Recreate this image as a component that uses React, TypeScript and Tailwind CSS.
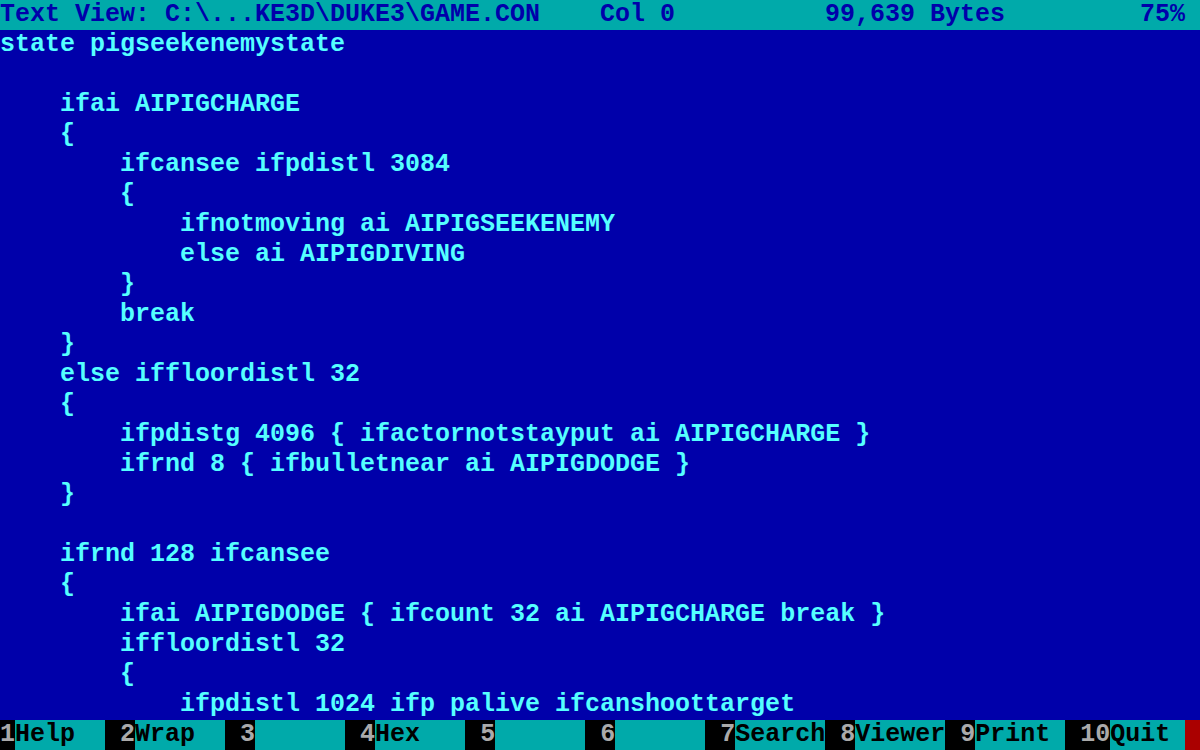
const lines = [
  "state pigseekenemystate",
  "",
  "    ifai AIPIGCHARGE",
  "    {",
  "        ifcansee ifpdistl 3084",
  "        {",
  "            ifnotmoving ai AIPIGSEEKENEMY",
  "            else ai AIPIGDIVING",
  "        }",
  "        break",
  "    }",
  "    else iffloordistl 32",
  "    {",
  "        ifpdistg 4096 { ifactornotstayput ai AIPIGCHARGE }",
  "        ifrnd 8 { ifbulletnear ai AIPIGDODGE }",
  "    }",
  "",
  "    ifrnd 128 ifcansee",
  "    {",
  "        ifai AIPIGDODGE { ifcount 32 ai AIPIGCHARGE break }",
  "        iffloordistl 32",
  "        {",
  "            ifpdistl 1024 ifp palive ifcanshoottarget",
];

const keys = [
  { n: "1", label: "Help  " },
  { n: " 2", label: "Wrap  " },
  { n: " 3", label: "      " },
  { n: " 4", label: "Hex   " },
  { n: " 5", label: "      " },
  { n: " 6", label: "      " },
  { n: " 7", label: "Search" },
  { n: " 8", label: "Viewer" },
  { n: " 9", label: "Print " },
  { n: " 10", label: "Quit " },
];

export default function App() {
  return (
    <div
      className="w-[1200px] h-[750px] overflow-hidden bg-[#0000aa] text-[25px] font-bold flex flex-col"
      style={{ fontFamily: '"Liberation Mono", "DejaVu Sans Mono", monospace' }}
    >
      {/* status line */}
      <div className="h-[30px] leading-[30px] bg-[#00aaaa] text-[#0000aa] flex whitespace-pre">
        <span className="w-[600px]">Text View: C:\...KE3D\DUKE3\GAME.CON</span>
        <span className="w-[225px]">Col 0</span>
        <span className="w-[315px]">99,639 Bytes</span>
        <span className="w-[60px]">75%</span>
      </div>

      {/* file body */}
      <div className="flex-1 text-[#55ffff]">
        {lines.map((l, i) => (
          <div key={i} className="h-[30px] leading-[30px] whitespace-pre">
            {l}
          </div>
        ))}
      </div>

      {/* function keys */}
      <div className="h-[30px] leading-[30px] flex whitespace-pre">
        {keys.map((k) => (
          <div key={k.n} className="flex">
            <span className="bg-black text-[#aaaaaa]">{k.n}</span>
            <span className="bg-[#00aaaa] text-black">{k.label}</span>
          </div>
        ))}
        <span className="w-[15px] bg-[#aa0000]"> </span>
      </div>
    </div>
  );
}
